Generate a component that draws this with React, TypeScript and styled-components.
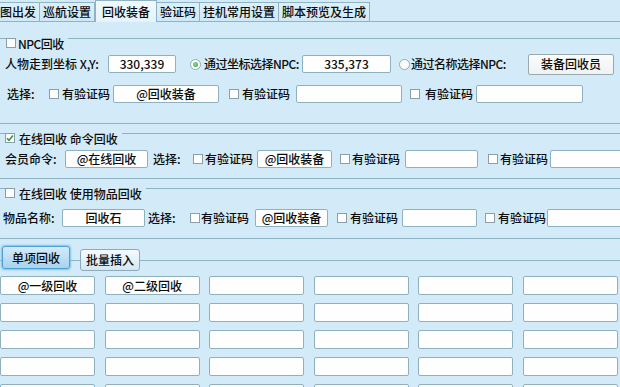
import React from "react";
import styled, { createGlobalStyle } from "styled-components";

const GlobalStyle = createGlobalStyle`
  html, body {
    margin: 0;
    padding: 0;
    background: #d3ebf8;
    overflow: hidden;
  }
  body {
    font-family: "Noto Sans CJK SC", "Liberation Sans", sans-serif;
    font-size: 12px;
    font-weight: 500;
    color: #0c0c0c;
  }
`;

const LINE = "#8db3c4";
const BG = "#d3ebf8";

const Page = styled.div`
  width: 640px;
  height: 387px;
  display: flex;
  flex-direction: column;
`;

const TabBar = styled.div`
  height: 22px;
  display: flex;
  align-items: flex-end;
  border-bottom: 1px solid ${LINE};
`;

const Tab = styled.div<{ $active?: boolean; $first?: boolean }>`
  height: ${(p) => (p.$active ? 22 : 19)}px;
  padding: 0 ${(p) => (p.$active ? 6 : 3)}px;
  margin-left: ${(p) => (p.$first ? -3 : 0)}px;
  margin-bottom: ${(p) => (p.$active ? -1 : 0)}px;
  display: flex;
  align-items: center;
  box-sizing: border-box;
  white-space: nowrap;
  line-height: 12px;
  border-right: 1px solid ${LINE};
  border-top: 1px solid ${LINE};
  border-left: ${(p) => (p.$active ? `1px solid ${LINE}` : "none")};
  background: ${(p) =>
    p.$active ? "linear-gradient(#f2f9fd, #e4f3fb)" : "linear-gradient(#dcf0fa, #cfe8f6)"};
`;

const GroupBox = styled.div<{ $mt: number; $pb: number }>`
  margin-top: ${(p) => p.$mt}px;
  padding-bottom: ${(p) => p.$pb}px;
  border-top: 1px solid ${LINE};
  border-bottom: 1px solid ${LINE};
  display: flex;
  flex-direction: column;
`;

const Legend = styled.div<{ $ml: number }>`
  align-self: flex-start;
  margin-top: -1px;
  margin-left: ${(p) => p.$ml}px;
  padding-right: 4px;
  height: 12px;
  display: flex;
  align-items: flex-start;
  background: ${BG};
  line-height: 12px;
  white-space: nowrap;
`;

const Row = styled.div<{ $mt: number; $pl: number }>`
  margin-top: ${(p) => p.$mt}px;
  padding-left: ${(p) => p.$pl}px;
  height: 20px;
  display: flex;
  align-items: center;
`;

const Label = styled.span<{ $ml?: number; $w?: number; $tight?: boolean }>`
  margin-left: ${(p) => p.$ml ?? 0}px;
  ${(p) => (p.$w ? `width: ${p.$w}px;` : "")}
  letter-spacing: ${(p) => (p.$tight ? "-0.5px" : "0")};
  flex-shrink: 0;
  white-space: nowrap;
  line-height: 12px;
`;

const Field = styled.div<{ $w: number; $ml?: number }>`
  width: ${(p) => p.$w}px;
  height: 18px;
  margin-left: ${(p) => p.$ml ?? 0}px;
  flex-shrink: 0;
  box-sizing: border-box;
  border: 1px solid #8fb1bd;
  border-radius: 2px;
  background: #fdfefd;
  display: flex;
  align-items: center;
  justify-content: center;
  line-height: 12px;
  white-space: nowrap;
`;

const Box = styled.span<{ $ml?: number }>`
  width: 10px;
  height: 10px;
  margin-left: ${(p) => p.$ml ?? 0}px;
  flex-shrink: 0;
  box-sizing: border-box;
  border: 1px solid #8a9fab;
  background: #fff;
  display: inline-flex;
  align-items: center;
  justify-content: center;
`;

const Ring = styled.span<{ $ml?: number }>`
  width: 11px;
  height: 11px;
  margin-left: ${(p) => p.$ml ?? 0}px;
  flex-shrink: 0;
  box-sizing: border-box;
  border-radius: 50%;
  border: 1px solid #95a9b3;
  background: #fbfdfd;
  display: inline-flex;
  align-items: center;
  justify-content: center;
`;

const Dot = styled.span`
  width: 5px;
  height: 5px;
  border-radius: 50%;
  background: radial-gradient(circle at 40% 40%, #8fe08a, #2f9a3a);
`;

const PlainButton = styled.div<{ $w: number; $ml: number }>`
  width: ${(p) => p.$w}px;
  height: 21px;
  margin-left: ${(p) => p.$ml}px;
  flex-shrink: 0;
  box-sizing: border-box;
  border: 1px solid #9aa9ae;
  border-radius: 2px;
  background: linear-gradient(#fbfcfc, #eef3f4);
  display: flex;
  align-items: center;
  justify-content: center;
  line-height: 12px;
`;

const Strip = styled.div`
  height: 33px;
  padding: 7px 0 0 2px;
  box-sizing: border-box;
  display: flex;
  align-items: flex-start;
  gap: 10px;
  background: linear-gradient(
    to bottom,
    transparent 21px,
    ${LINE} 21px,
    ${LINE} 22px,
    transparent 22px
  );
`;

const StripButton = styled.div<{ $active?: boolean }>`
  width: ${(p) => (p.$active ? 68 : 60)}px;
  height: ${(p) => (p.$active ? 23 : 22)}px;
  margin-top: ${(p) => (p.$active ? 0 : 3)}px;
  box-sizing: border-box;
  border-radius: 3px;
  border: 1px solid ${(p) => (p.$active ? "#4d9fd4" : "#8eaab8")};
  box-shadow: ${(p) => (p.$active ? "0 0 2px 1px #7cc0ea" : "none")};
  background: ${(p) =>
    p.$active ? "linear-gradient(#d4ebf9, #a8d3ef)" : "linear-gradient(#f5fbfe, #d3e8f4)"};
  display: flex;
  align-items: center;
  justify-content: center;
  line-height: 12px;
`;

const Grid = styled.div`
  margin-top: 5px;
  display: grid;
  grid-template-columns: repeat(6, 95px);
  grid-auto-rows: 19px;
  column-gap: 9.6px;
  row-gap: 8px;
`;

const Cell = styled.div`
  box-sizing: border-box;
  border: 1px solid #8fb1bd;
  border-radius: 2px;
  background: #fdfefd;
  display: flex;
  align-items: center;
  justify-content: center;
  line-height: 12px;
`;

const Check = ({ checked, ml }: { checked?: boolean; ml?: number }) => (
  <Box $ml={ml}>
    {checked && (
      <svg width="8" height="8" viewBox="0 0 8 8">
        <path d="M1 4.2 L3 6.3 L7 1.5" fill="none" stroke="#2f9a3a" strokeWidth="1.6" />
      </svg>
    )}
  </Box>
);

const Radio = ({ checked, ml }: { checked?: boolean; ml?: number }) => (
  <Ring $ml={ml}>{checked && <Dot />}</Ring>
);

const tabs = ["图出发", "巡航设置", "回收装备", "验证码", "挂机常用设置", "脚本预览及生成"];
const cells = ["@一级回收", "@二级回收"];

export default function App() {
  return (
    <Page>
      <GlobalStyle />
      <TabBar>
        {tabs.map((t, i) => (
          <Tab key={t} $first={i === 0} $active={i === 2}>
            {t}
          </Tab>
        ))}
      </TabBar>

      <GroupBox $mt={16} $pb={19}>
        <Legend $ml={6}>
          <Check />
          <Label $ml={2} $tight>NPC回收</Label>
        </Legend>
        <Row $mt={4} $pl={5}>
          <Label $w={100}>人物走到坐标 X,Y:</Label>
          <Field $w={68} $ml={3}>330,339</Field>
          <Radio checked ml={14} />
          <Label $ml={3} $w={95} $tight>通过坐标选择NPC:</Label>
          <Field $w={89} $ml={3}>335,373</Field>
          <Radio ml={8} />
          <Label $ml={1} $w={100} $tight>通过名称选择NPC:</Label>
          <PlainButton $w={86} $ml={17}>装备回收员</PlainButton>
        </Row>
        <Row $mt={10} $pl={7}>
          <Label $w={30}>选择:</Label>
          <Check ml={12} />
          <Label $ml={3} $w={48}>有验证码</Label>
          <Field $w={106} $ml={3}>@回收装备</Field>
          <Check ml={10} />
          <Label $ml={3} $w={48}>有验证码</Label>
          <Field $w={106} $ml={6} />
          <Check ml={8} />
          <Label $ml={5} $w={48}>有验证码</Label>
          <Field $w={107} $ml={3} />
        </Row>
      </GroupBox>

      <GroupBox $mt={9} $pb={9}>
        <Legend $ml={5}>
          <Check checked />
          <Label $ml={4}>在线回收 命令回收</Label>
        </Legend>
        <Row $mt={4} $pl={5}>
          <Label $w={56}>会员命令:</Label>
          <Field $w={83} $ml={4}>@在线回收</Field>
          <Label $ml={5} $w={30}>选择:</Label>
          <Check ml={10} />
          <Label $ml={2} $w={48}>有验证码</Label>
          <Field $w={75} $ml={4}>@回收装备</Field>
          <Check ml={8} />
          <Label $ml={2} $w={48}>有验证码</Label>
          <Field $w={73} $ml={5} />
          <Check ml={10} />
          <Label $ml={2} $w={48}>有验证码</Label>
          <Field $w={80} $ml={2} />
        </Row>
      </GroupBox>

      <GroupBox $mt={9} $pb={10}>
        <Legend $ml={5}>
          <Check />
          <Label $ml={4}>在线回收 使用物品回收</Label>
        </Legend>
        <Row $mt={8} $pl={3}>
          <Label $w={56}>物品名称:</Label>
          <Field $w={83} $ml={3}>回收石</Field>
          <Label $ml={3} $w={30}>选择:</Label>
          <Check ml={12} />
          <Label $ml={1} $w={48}>有验证码</Label>
          <Field $w={73} $ml={6}>@回收装备</Field>
          <Check ml={9} />
          <Label $ml={3} $w={48}>有验证码</Label>
          <Field $w={75} $ml={4} />
          <Check ml={8} />
          <Label $ml={3} $w={48}>有验证码</Label>
          <Field $w={80} $ml={1} />
        </Row>
      </GroupBox>

      <Strip>
        <StripButton $active>单项回收</StripButton>
        <StripButton>批量插入</StripButton>
      </Strip>

      <Grid>
        {Array.from({ length: 30 }).map((_, i) => (
          <Cell key={i}>{cells[i] ?? ""}</Cell>
        ))}
      </Grid>
    </Page>
  );
}
